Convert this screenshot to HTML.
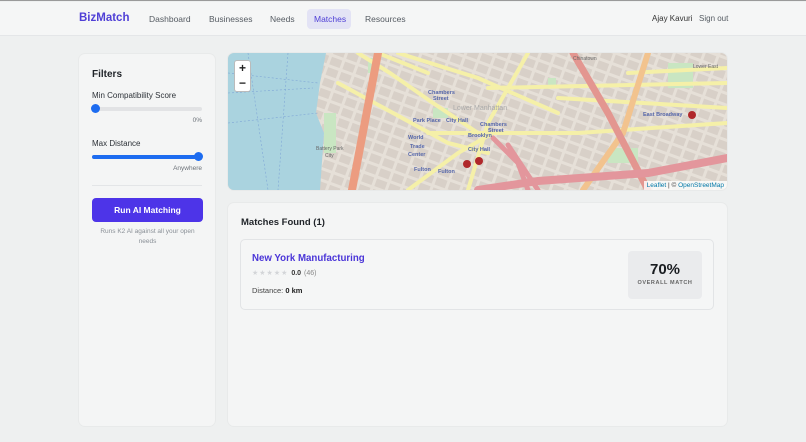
<!DOCTYPE html>
<html><head><meta charset="utf-8"><style>
*{box-sizing:border-box;margin:0;padding:0}
body{width:806px;height:442px;overflow:hidden;background:#eef0f0;font-family:"Liberation Sans",sans-serif;color:#1f2328;position:relative;border-top:1px solid #9a9a9a}
.nav{position:absolute;left:0;top:1px;width:806px;height:34px;background:#f5f6f6;border-bottom:1px solid #e4e6e8}
.logo{position:absolute;left:79px;top:10px;font-weight:bold;font-size:11.5px;color:#4f3fd6}
.nl{position:absolute;top:12px;font-size:8.5px;color:#555b62}
.act{position:absolute;left:307px;top:7px;width:44px;height:20px;background:#e3e3f5;border-radius:4px}
.card{position:absolute;background:#f4f5f5;border-radius:6px;box-shadow:0 0 0 1px #e8eaea}
.lbl{position:absolute;font-size:8px;color:#2d3238}
.sm{position:absolute;font-size:7px;color:#6b7178}
</style></head><body>
<div class="nav">
<div class="logo">BizMatch</div>
<div class="nl" style="left:149px">Dashboard</div>
<div class="nl" style="left:209px">Businesses</div>
<div class="nl" style="left:270px">Needs</div>
<div class="act"></div>
<div class="nl" style="left:314px;color:#4f3fd6">Matches</div>
<div class="nl" style="left:365px">Resources</div>
<div class="nl" style="left:652px;color:#333;font-size:8px">Ajay Kavuri</div>
<div class="nl" style="left:699px;font-size:8px">Sign out</div>
</div>

<div class="card" style="left:79px;top:53px;width:136px;height:372px">
<div style="position:absolute;left:13px;top:15px;font-weight:bold;font-size:10px">Filters</div>
<div class="lbl" style="left:13px;top:37px">Min Compatibility Score</div>
<div style="position:absolute;left:13px;top:53px;width:110px;height:4px;background:#e2e3e5;border-radius:2px"></div>
<div style="position:absolute;left:12px;top:50px;width:9px;height:9px;background:#1d6cf0;border-radius:50%"></div>
<div class="sm" style="right:13px;top:63px;font-size:6.5px">0%</div>
<div class="lbl" style="left:13px;top:85px">Max Distance</div>
<div style="position:absolute;left:13px;top:101px;width:110px;height:4px;background:#1d6cf0;border-radius:2px"></div>
<div style="position:absolute;left:115px;top:98px;width:9px;height:9px;background:#1d6cf0;border-radius:50%"></div>
<div class="sm" style="right:13px;top:111px;font-size:6.5px">Anywhere</div>
<div style="position:absolute;left:13px;top:131px;width:110px;height:1px;background:#e3e5e7"></div>
<div style="position:absolute;left:13px;top:144px;width:111px;height:24px;background:#4d34e8;border-radius:4px;color:#fff;font-weight:bold;font-size:8.5px;text-align:center;line-height:24px">Run AI Matching</div>
<div class="sm" style="left:13px;top:173px;width:111px;text-align:center;font-size:6.5px;line-height:10px;color:#8a9097">Runs K2 AI against all your open needs</div>
</div>

<div class="card" style="left:228px;top:52px;width:499px;height:137px;overflow:hidden;background:#ede8e1">
<svg width="499" height="137" viewBox="0 0 499 137" style="position:absolute;left:0;top:0">
<defs><pattern id="b" width="14" height="11" patternUnits="userSpaceOnUse" patternTransform="rotate(20)"><rect width="14" height="11" fill="#e6e0d8"/><rect x="1" y="1" width="11" height="8" fill="#d8d0c8"/></pattern></defs>
<rect width="499" height="137" fill="url(#b)"/>
<path d="M0 0H98L92 30 88 60 96 80 92 137H0Z" fill="#aad3df"/>
<g stroke="#7fa6d6" stroke-width=".6" fill="none" stroke-dasharray="2 2"><path d="M0 20L90 30M0 40L85 35M20 0L40 137M60 0L50 137M0 70L90 60"/></g>
<g fill="#c9e6c2"><rect x="140" y="5" width="10" height="15"/><rect x="320" y="25" width="8" height="10"/><rect x="380" y="95" width="30" height="15"/><rect x="440" y="10" width="25" height="25"/><rect x="205" y="55" width="15" height="10"/><rect x="96" y="60" width="12" height="40"/></g>
<g fill="none" stroke-linecap="round">
<path d="M130 0L162 20 205 50 250 80M110 30L220 90 260 100M170 0L250 25 330 60M300 0L260 70 240 137M150 0L200 20M260 35L499 30M200 80L350 80 499 70M180 137L230 100 265 80M330 45L499 55M400 20L499 15" stroke="#f5f0a8" stroke-width="4"/>
<path d="M150 0L124 137" stroke="#ec9c80" stroke-width="8"/>
<path d="M420 0L395 80 355 137" stroke="#f2c38e" stroke-width="6"/>
<path d="M345 0L380 60 420 137" stroke="#e39690" stroke-width="7"/>
<path d="M250 137L310 128 420 120 499 105" stroke="#e3969c" stroke-width="8"/>
<path d="M265 85L290 110 300 137M280 92L310 137" stroke="#e3969c" stroke-width="5"/>
</g>
<g fill="#b0282a"><circle cx="239" cy="111" r="4"/><circle cx="251" cy="108" r="4"/><circle cx="464" cy="62" r="4"/></g>
<g font-family="Liberation Sans" font-size="5.5" fill="#5566aa" font-weight="bold">
<text x="200" y="41">Chambers</text><text x="205" y="47">Street</text>
<text x="185" y="69">Park Place</text><text x="218" y="69">City Hall</text>
<text x="252" y="73">Chambers</text><text x="260" y="79">Street</text>
<text x="240" y="84">Brooklyn</text><text x="240" y="98">City Hall</text>
<text x="180" y="86">World</text><text x="182" y="95">Trade</text><text x="180" y="103">Center</text>
<text x="186" y="118">Fulton</text><text x="210" y="120">Fulton</text>
<text x="415" y="63">East Broadway</text>
</g>
<g font-family="Liberation Sans" font-size="5" fill="#666"><text x="88" y="97">Battery Park</text><text x="97" y="104">City</text><text x="225" y="57" fill="#aaa" font-size="7">Lower Manhattan</text><text x="345" y="7">Chinatown</text><text x="465" y="15">Lower East</text></g>
</svg>
<div style="position:absolute;left:6px;top:7px;width:17px;height:32px;background:#fff;border:1px solid #bbb;border-radius:3px;font-size:12px;text-align:center;line-height:15px;color:#222;font-weight:bold">+<br>−</div>
<div style="position:absolute;right:0;bottom:0;background:rgba(255,255,255,.8);font-size:6.5px;padding:1px 3px;color:#333"><span style="color:#0078a8">Leaflet</span> | © <span style="color:#0078a8">OpenStreetMap</span></div>
</div>

<div class="card" style="left:228px;top:202px;width:499px;height:223px">
<div style="position:absolute;left:13px;top:14px;font-weight:bold;font-size:9.5px">Matches Found (1)</div>
<div style="position:absolute;left:12px;top:36px;width:474px;height:71px;border:1px solid #e2e4e6;border-radius:5px;background:#f5f6f6">
<div style="position:absolute;left:11px;top:13px;font-weight:bold;font-size:9.7px;color:#4a35d8">New York Manufacturing</div>
<div style="position:absolute;left:11px;top:29px;font-size:7px;color:#d3d5d8;letter-spacing:1px">★★★★★ <span style="color:#333;font-weight:bold;letter-spacing:0">0.0</span> <span style="color:#888;letter-spacing:0">(46)</span></div>
<div style="position:absolute;left:11px;top:46px;font-size:7.5px;color:#444">Distance: <b style="color:#222">0 km</b></div>
<div style="position:absolute;left:387px;top:11px;width:74px;height:48px;background:#eaebed;border-radius:4px;text-align:center">
<div style="font-size:15px;font-weight:bold;margin-top:10px;color:#1a1d21">70%</div>
<div style="font-size:5.5px;color:#666;font-weight:bold;letter-spacing:.6px;margin-top:2px">OVERALL MATCH</div>
</div>
</div>
</div>
</body></html>
